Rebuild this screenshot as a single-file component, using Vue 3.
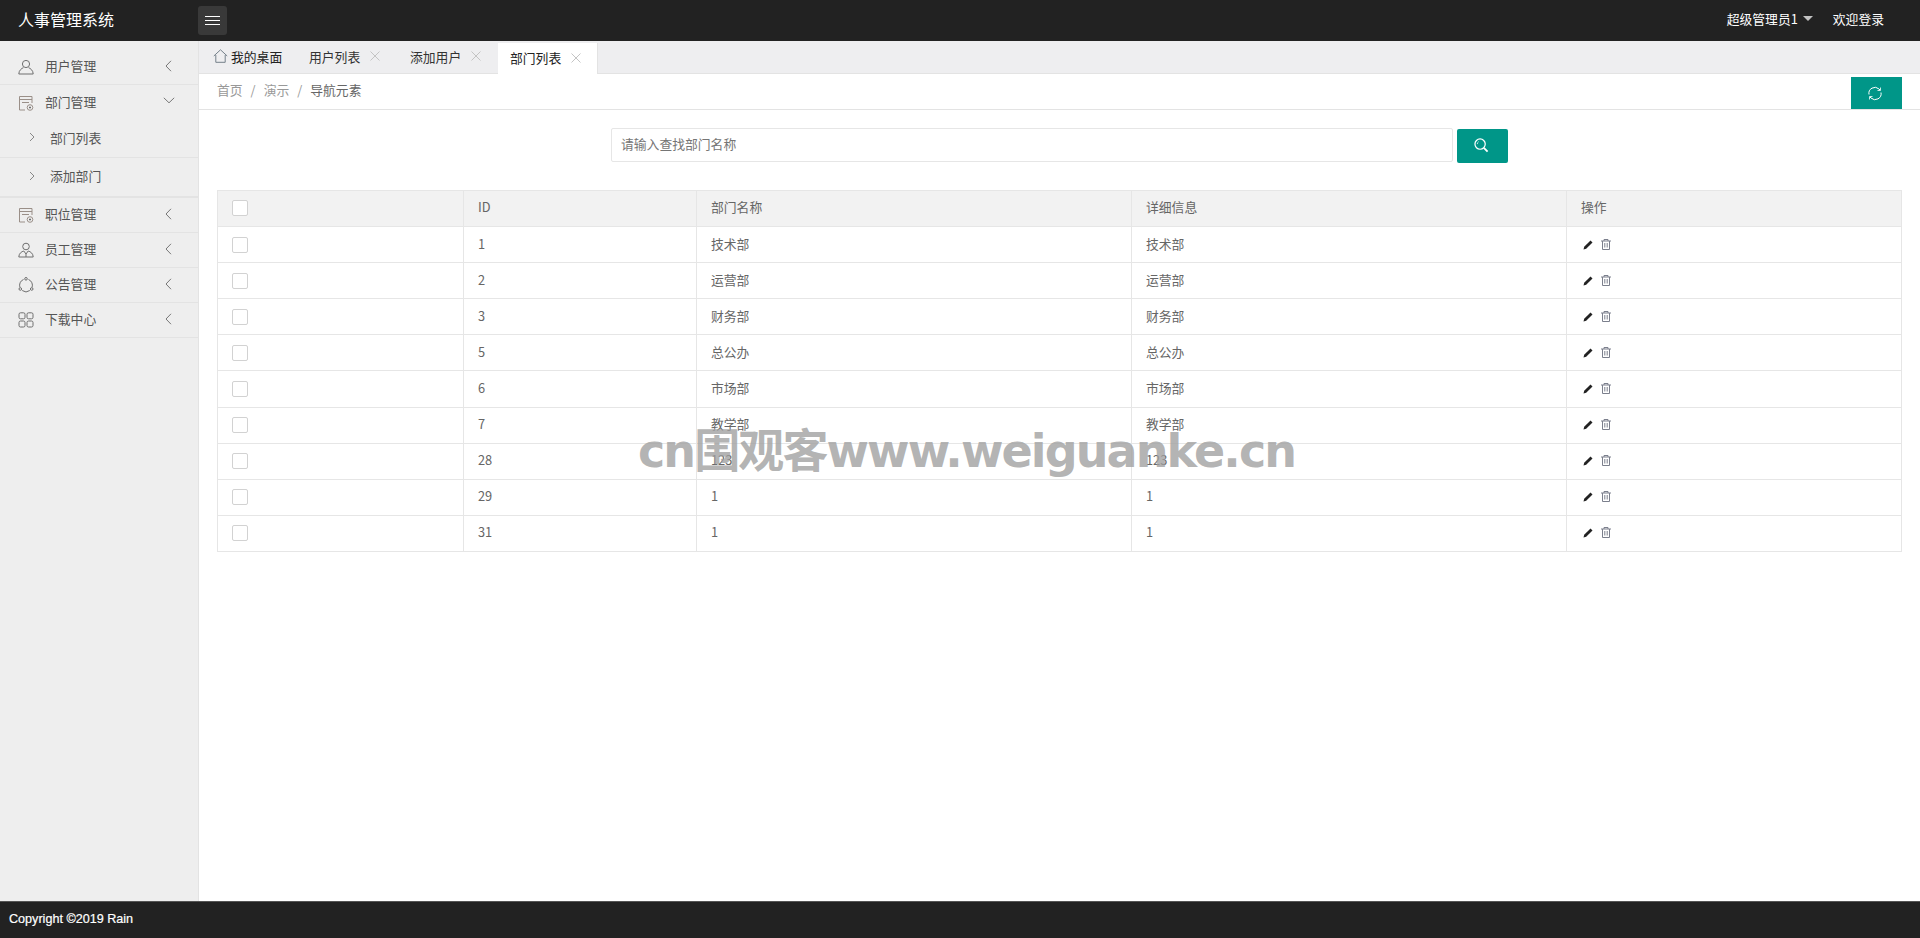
<script setup>
const menus = [
  { name: '用户管理', icon: 'user' },
  { name: '部门管理', icon: 'form', open: true, subs: ['部门列表', '添加部门'] },
  { name: '职位管理', icon: 'form' },
  { name: '员工管理', icon: 'staff' },
  { name: '公告管理', icon: 'circle' },
  { name: '下载中心', icon: 'apps' },
]
const tabs = [
  { name: '用户列表' },
  { name: '添加用户' },
  { name: '部门列表', active: true },
]
const rows = [
  ['1', '技术部', '技术部'],
  ['2', '运营部', '运营部'],
  ['3', '财务部', '财务部'],
  ['5', '总公办', '总公办'],
  ['6', '市场部', '市场部'],
  ['7', '教学部', '教学部'],
  ['28', '123', '123'],
  ['29', '1', '1'],
  ['31', '1', '1'],
]
</script>

<template>
  <div class="page">
    <header class="top">
      <div class="logo">人事管理系统</div>
      <button class="burger" aria-label="菜单">
        <svg width="16" height="12" viewBox="0 0 16 12"><path d="M0 1.500h15M0 5.500h15M0 9.500h15" stroke="#fff" stroke-width="1" fill="none"/></svg>
      </button>
      <div class="top-right">
        <span class="admin">超级管理员1<i class="caret"></i></span>
        <span class="welcome">欢迎登录</span>
      </div>
    </header>

    <div class="middle">
      <aside class="side">
        <div v-for="m in menus" :key="m.name" class="group">
          <div class="item" :class="{ open: m.open }">
            <svg class="mi" width="16" height="16" viewBox="0 0 16 16" fill="none" stroke="#6f6f6f" stroke-width="1">
              <template v-if="m.icon === 'user'">
                <circle cx="8" cy="5" r="3.600"/><path d="M.8 15c0-3.600 3-5.800 4.600-6.300M15.200 15c0-3.600-3-5.800-4.600-6.300M.8 15h14.400"/>
              </template>
              <template v-else-if="m.icon === 'form'">
                <path d="M14 8V1.500H1.500v13.500H7" stroke="#9a8f88"/><path d="M1.500 4.500H14M4 7.500h7" stroke="#9a8f88"/><circle cx="12" cy="12.500" r="2.800" stroke="#9a8f88"/><path d="M11 12.500h2M12 11.500v2"/>
              </template>
              <template v-else-if="m.icon === 'staff'">
                <circle cx="8" cy="4.500" r="3.300"/><path d="M.8 15c0-3.500 2.800-5.500 5-6l2.200 3 2.200-3c2.200.5 5 2.500 5 6zM8 12v3"/>
              </template>
              <template v-else-if="m.icon === 'circle'">
                <path d="M5.500 2.500a6.200 6.200 0 0 0-3.500 8M10.500 2.500a6.200 6.200 0 0 1 3.500 8M4.200 13.500a6.200 6.200 0 0 0 7.600 0"/><circle cx="8" cy="1.800" r="1.300"/><circle cx="2.300" cy="12" r="1.300"/><circle cx="13.700" cy="12" r="1.300"/>
              </template>
              <template v-else>
                <rect x="1" y=".8" width="6" height="6" rx="1.500"/><rect x="9" y=".8" width="6" height="6" rx="1.500"/><rect x="1" y="9" width="6" height="6" rx="1.500"/><rect x="9" y="9" width="6" height="6" rx="1.500"/>
              </template>
            </svg>
            <span class="label">{{ m.name }}</span>
            <svg v-if="m.open" class="arrow down" width="12" height="7" viewBox="0 0 12 7"><path d="M.8.8 6 5.800 11.200.8" fill="none" stroke="#777"/></svg>
            <svg v-else class="arrow" width="7" height="12" viewBox="0 0 7 12"><path d="M6 .8 1 6l5 5.200" fill="none" stroke="#777"/></svg>
          </div>
          <div v-for="s in m.subs" :key="s" class="sub">
            <svg width="6" height="10" viewBox="0 0 6 10"><path d="M1 1l4 4-4 4" fill="none" stroke="#888"/></svg>
            <span>{{ s }}</span>
          </div>
        </div>
      </aside>

      <main class="main">
        <nav class="tabs">
          <div class="tab home">
            <svg width="15" height="14" viewBox="0 0 15 14" fill="none" stroke="#75808a"><path d="M.8 7 7.500.8 14.200 7M2.800 6v7.300h9.400V6"/></svg>
            <span>我的桌面</span>
          </div>
          <div v-for="t in tabs" :key="t.name" class="tab" :class="{ active: t.active }">
            <span>{{ t.name }}</span>
            <svg width="10" height="10" viewBox="0 0 10 10"><path d="M.5.5l9 9M9.500.5l-9 9" stroke="#c4c4c4" fill="none"/></svg>
          </div>
        </nav>

        <div class="crumbs">
          <div class="trail">
            <span>首页</span><i>/</i><span>演示</span><i>/</i><span class="current">导航元素</span>
          </div>
          <button class="refresh" aria-label="刷新">
            <svg width="16" height="15" viewBox="0 0 16 15" fill="none" stroke="#fff"><path d="M2 8.500A6 6 0 0 1 12 3l1 1M14 6.500A6 6 0 0 1 4 12l-1-1"/><path d="M13.500 1.500v3h-3M2.500 13.500v-3h3" stroke-width=".8"/></svg>
          </button>
        </div>

        <div class="body">
          <form class="search" @submit.prevent>
            <input class="field" type="text" placeholder="请输入查找部门名称" />
            <button class="go" aria-label="搜索">
              <svg width="15" height="15" viewBox="0 0 16 16" fill="none" stroke="#fff"><circle cx="6.500" cy="6.500" r="5.500" stroke-width="1.300"/><path d="M10.500 10.500l4 4" stroke-width="2"/><path d="M3.500 6.500a3 3 0 0 1 1.500-2.600" stroke-width=".8"/></svg>
            </button>
          </form>

          <table class="grid">
            <colgroup>
              <col class="c1" /><col class="c2" /><col class="c3" /><col class="c3" /><col />
            </colgroup>
            <thead>
              <tr>
                <th><span class="check"></span></th>
                <th>ID</th>
                <th>部门名称</th>
                <th>详细信息</th>
                <th>操作</th>
              </tr>
            </thead>
            <tbody>
              <tr v-for="r in rows" :key="r[0]">
                <td><span class="check"></span></td>
                <td>{{ r[0] }}</td>
                <td>{{ r[1] }}</td>
                <td>{{ r[2] }}</td>
                <td class="ops">
                  <svg width="10" height="10" viewBox="0 0 10 10"><path d="M.5 9.500l.7-2.700L7.500.5l2 2-6.300 6.300z" fill="#222"/></svg>
                  <svg width="10" height="11" viewBox="0 0 10 11" fill="none" stroke="#7b7f8c"><path d="M0 2h10M3 2V.5h4V2M1.500 2v8.500h7V2M3.800 4v4.500M6.200 4v4.500"/></svg>
                </td>
              </tr>
            </tbody>
          </table>
        </div>
      </main>
    </div>

    <footer class="foot">Copyright ©2019 Rain</footer>
    <div class="mark">cn围观客www.weiguanke.cn</div>
  </div>
</template>

<style>
html, body { margin: 0; padding: 0; background: #fff; }
</style>

<style scoped>
.page {
  position: relative;
  height: 938px;
  display: flex;
  flex-direction: column;
  overflow: hidden;
  font-family: "Noto Sans CJK SC", "Liberation Sans", sans-serif;
  font-size: 12.8px;
  color: #666;
}
.top {
  height: 41px;
  flex: none;
  background: #222;
  display: flex;
  align-items: center;
  color: #fff;
}
.logo { width: 198px; padding: 0 0 4px 18px; box-sizing: border-box; font-size: 16px; }
.burger {
  width: 29px; height: 29px; border: 0; border-radius: 3px; background: #393939;
  display: flex; align-items: center; justify-content: center; padding: 0;
}
.top-right { margin-left: auto; display: flex; align-items: center; padding: 0 36px 5px 0; }
.admin { display: flex; align-items: center; }
.caret {
  width: 0; height: 0; margin-left: 5px; margin-top: 1px;
  border-left: 5.500px solid transparent; border-right: 5.500px solid transparent; border-top: 5px solid #c2c2c2;
}
.welcome { margin-left: 20px; }
.middle { flex: 1; display: flex; min-height: 0; }
.side {
  width: 199px; flex: none; box-sizing: border-box;
  background: #eee; border-right: 1px solid #e3e3e3; padding-top: 9px; color: #555;
}
.item {
  height: 35px; display: flex; align-items: center; box-sizing: border-box;
  padding-left: 18px; border-bottom: 1px solid #e3e3e3; position: relative;
}
.item.open { border-bottom: 0; }
.mi { flex: none; }
.label { margin: 0 0 3px 11px; }
.arrow { position: absolute; left: 165px; top: 10px; }
.arrow.down { left: 163px; top: 12px; }
.sub {
  height: 37.500px; display: flex; align-items: center; box-sizing: border-box;
  padding: 0 0 2px 29px; border-bottom: 1px solid #e3e3e3;
}
.sub:last-child { height: 39.500px; }
.sub span { margin-left: 15px; }
.group:nth-child(2) { border-bottom: 1px solid #e3e3e3; }
.main { flex: 1; min-width: 0; display: flex; flex-direction: column; }
.tabs {
  height: 33px; box-sizing: border-box; flex: none; background: #eeeef0;
  border-bottom: 1px solid #e3e3e3; display: flex; align-items: flex-end; color: #333;
}
.tab { height: 32px; display: flex; align-items: center; box-sizing: border-box; padding: 0 12px 2px; width: 101px; }
.tab svg { margin-left: 10px; flex: none; }
.tab.home { width: 98px; padding-left: 14px; color: #222; }
.tab.home svg { margin: 0 3px 0 0; }
.tab.active { background: #fff; height: 31px; width: 99px; margin-left: -1px; position: relative; top: 1px; color: #222; box-shadow: 1px 0 0 #e3e3e3; }
.crumbs {
  height: 36px; flex: none; box-sizing: border-box; border-bottom: 1px solid #e3e3e3;
  display: flex; align-items: center; justify-content: space-between; padding: 0 18px;
}
.trail { display: flex; align-items: center; color: #999; margin-top: -5px; }
.trail i { font-style: normal; margin: 0 8px; }
.current { color: #666; }
.refresh {
  width: 51px; height: 32px; border: 0; background: #009688; padding: 0 4px 0 0; align-self: flex-end;
  display: flex; align-items: center; justify-content: center;
}
.body { padding: 18px 18px 0; }
.search { display: flex; justify-content: center; gap: 4px; align-items: flex-start; }
.field {
  width: 842px; height: 34px; box-sizing: border-box; border: 1px solid #e6e6e6; border-radius: 2px;
  padding: 0 9px 3px; font: inherit; color: #666; background: #fff; outline: none;
}
.field::placeholder { color: #757575; opacity: 1; }
.go {
  width: 51px; height: 34px; margin-top: 1px; border: 0; border-radius: 2px; background: #009688; padding: 0 3px 2px 0;
  display: flex; align-items: center; justify-content: center;
}
.grid {
  margin-top: 27px; width: 1685px; table-layout: fixed; border-collapse: collapse;
  background: #fff; color: #666;
}
.c1 { width: 246px; }
.c2 { width: 233px; }
.c3 { width: 435px; }
th, td {
  border: 1px solid #e6e6e6; padding: 0 14px 2px; height: 36.100px; box-sizing: border-box;
  text-align: left; font-weight: 400; line-height: 18px; font-size: 12.8px;
}
th { background: #f2f2f2; padding-bottom: 3px; }
.check {
  display: block; width: 16px; height: 16px; margin-top: 2px; box-sizing: border-box;
  border: 1px solid #d2d2d2; border-radius: 2px; background: #fff;
}
.ops svg { margin-right: 8px; vertical-align: -1px; }
.ops svg:first-child { margin-left: 2px; }
.foot {
  height: 37px; flex: none; background: #222; border-top: 1px solid #555; box-sizing: border-box;
  color: #fff; font-family: "Liberation Sans", Arial, sans-serif; font-size: 12.600px;
  padding-left: 9px; line-height: 35px; -webkit-text-stroke: .2px #fff;
}
.mark {
  position: absolute; left: 638px; top: 421px; white-space: nowrap;
  font-family: "DejaVu Sans", "Noto Sans CJK SC", sans-serif; letter-spacing: -1.900px;
  font-size: 46px; line-height: 60px; font-weight: 700; color: rgba(160,160,160,.8);
}
</style>
